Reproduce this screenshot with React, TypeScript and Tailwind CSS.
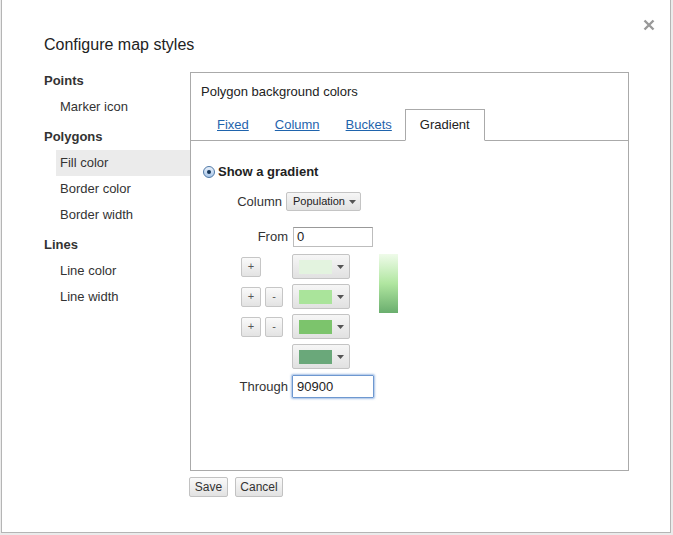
const sidebar: { title: string; items: string[] }[] = [
  { title: "Points", items: ["Marker icon"] },
  { title: "Polygons", items: ["Fill color", "Border color", "Border width"] },
  { title: "Lines", items: ["Line color", "Line width"] },
];

const stops = [
  { color: "#e3f3df", plus: true, minus: false },
  { color: "#aae49b", plus: true, minus: true },
  { color: "#7cc46c", plus: true, minus: true },
  { color: "#6aa87a", plus: false, minus: false },
];

function Arrow() {
  return (
    <svg width="7" height="4" viewBox="0 0 7 4" className="shrink-0">
      <path d="M0 0h7L3.5 4z" fill="#555" />
    </svg>
  );
}

function SmallButton({ label, wide }: { label: string; wide?: boolean }) {
  return (
    <div
      className={`flex h-[20px] items-center justify-center rounded-[2px] border border-[#c6c6c6] bg-gradient-to-b from-[#fafafa] to-[#e3e3e3] text-[11px] text-[#555] ${
        wide ? "w-[20px]" : "w-[18px]"
      }`}
    >
      {label}
    </div>
  );
}

function ColorSelect({ color }: { color: string }) {
  return (
    <div className="flex h-[25px] w-[58px] items-center rounded-[2px] border border-[#c4c4c4] bg-gradient-to-b from-[#f6f6f6] to-[#e1e1e1] pl-[6px]">
      <div className="h-[14px] w-[33px]" style={{ backgroundColor: color }} />
      <div className="ml-[5px]">
        <Arrow />
      </div>
    </div>
  );
}

export default function App() {
  return (
    <div className="h-[535px] w-[673px] overflow-hidden bg-[#ebebeb] font-['Liberation_Sans',Arial,sans-serif] text-[#333]">
      <div className="relative ml-px h-[533px] w-[670px] border-x border-b border-[#b5b5b5] bg-white pl-[42px] pt-[35px]">
        <svg
          width="12"
          height="12"
          viewBox="0 0 12 12"
          className="absolute right-[15px] top-[19px]"
        >
          <path d="M1.5 1.5l9 9M10.5 1.5l-9 9" stroke="#999" strokeWidth="2.4" />
        </svg>

        <div className="mb-[13px] text-[16px] leading-[20px] text-[#222]">Configure map styles</div>

        <div className="flex">
          <div className="w-[146px] text-[13px]">
            {sidebar.map((group, i) => (
              <div key={group.title} className={i > 0 ? "mt-[4px]" : ""}>
                <div className="h-[26px] font-bold leading-[26px]">{group.title}</div>
                {group.items.map((item) => (
                  <div
                    key={item}
                    className={`ml-3 h-[26px] pl-1 leading-[26px] ${
                      item === "Fill color" ? "bg-[#ebebeb]" : ""
                    }`}
                  >
                    {item}
                  </div>
                ))}
              </div>
            ))}
          </div>

          <div>
            <div className="mt-[4px] h-[399px] w-[439px] border border-[#aaa] text-[13px]">
              <div className="pl-[10px] pt-[11px] leading-[16px] text-[#222]">Polygon background colors</div>

              <div className="mt-[9px] flex h-[32px] items-end border-b border-[#aaa] pl-[13px]">
                {["Fixed", "Column", "Buckets"].map((tab) => (
                  <div key={tab} className="flex h-[31px] items-center px-[13px] text-[#1f64ad] underline">
                    {tab}
                  </div>
                ))}
                <div className="-mb-px flex h-[32px] items-center border border-[#aaa] border-b-white bg-white px-[14px] text-[#222]">
                  Gradient
                </div>
              </div>

              <div className="pl-[12px] pt-[23px]">
                <div className="flex h-[16px] items-center">
                  <div className="flex h-3 w-3 items-center justify-center rounded-full border border-[#4f78a6] bg-gradient-to-b from-[#e8f0fa] to-[#a9c6e8]">
                    <div className="h-[4px] w-[4px] rounded-full bg-[#16365a]" />
                  </div>
                  <span className="ml-[3px] font-bold text-[#222]">Show a gradient</span>
                </div>

                <div className="ml-[27px]">
                  <div className="mt-[12px] flex h-[19px] items-center">
                    <div className="w-[52px] text-right">Column</div>
                    <div className="ml-[4px] flex h-[19px] w-[75px] items-center rounded-[2px] border border-[#c4c4c4] bg-gradient-to-b from-[#f6f6f6] to-[#e1e1e1] pl-[6px] text-[11px] text-[#222]">
                      <span>Population</span>
                      <div className="ml-[4px]">
                        <Arrow />
                      </div>
                    </div>
                  </div>

                  <div className="mt-[16px] flex h-[20px] items-center">
                    <div className="w-[58px] text-right">From</div>
                    <div className="ml-[5px] flex h-[20px] w-[80px] items-center border border-[#bdbdbd] border-t-[#999] pl-[3px] text-[#222]">
                      0
                    </div>
                  </div>

                  <div className="mt-[7px] flex items-start">
                    <div className="flex flex-col gap-[5px]">
                      {stops.map((stop) => (
                        <div key={stop.color} className="flex h-[25px] items-center">
                          <div className="flex w-[62px] pl-[11px]">
                            {stop.plus && <SmallButton label="+" wide />}
                            {stop.minus && (
                              <div className="ml-[4px]">
                                <SmallButton label="-" />
                              </div>
                            )}
                          </div>
                          <ColorSelect color={stop.color} />
                        </div>
                      ))}
                    </div>
                    <div className="ml-[29px] h-[59px] w-[19px] bg-gradient-to-b from-[#effbea] via-[#b0e6a0] to-[#6aae6e]" />
                  </div>

                  <div className="mt-[6px] flex h-[23px] items-center">
                    <div className="w-[58px] text-right">Through</div>
                    <div className="ml-[4px] flex h-[23px] w-[82px] items-center rounded-[1px] border border-[#6e98d0] pl-[4px] text-[#222] shadow-[0_0_2px_1px_rgba(90,140,210,0.55)]">
                      90900
                    </div>
                  </div>
                </div>
              </div>
            </div>

            <div className="-ml-px mt-[6px] flex gap-[7px] text-[12px] text-[#333]">
              <div className="flex h-[20px] w-[39px] items-center justify-center rounded-[2px] border border-[#c2c2c2] bg-gradient-to-b from-[#fafafa] to-[#e2e2e2]">
                Save
              </div>
              <div className="flex h-[20px] w-[48px] items-center justify-center rounded-[2px] border border-[#c2c2c2] bg-gradient-to-b from-[#fafafa] to-[#e2e2e2]">
                Cancel
              </div>
            </div>
          </div>
        </div>
      </div>
    </div>
  );
}
